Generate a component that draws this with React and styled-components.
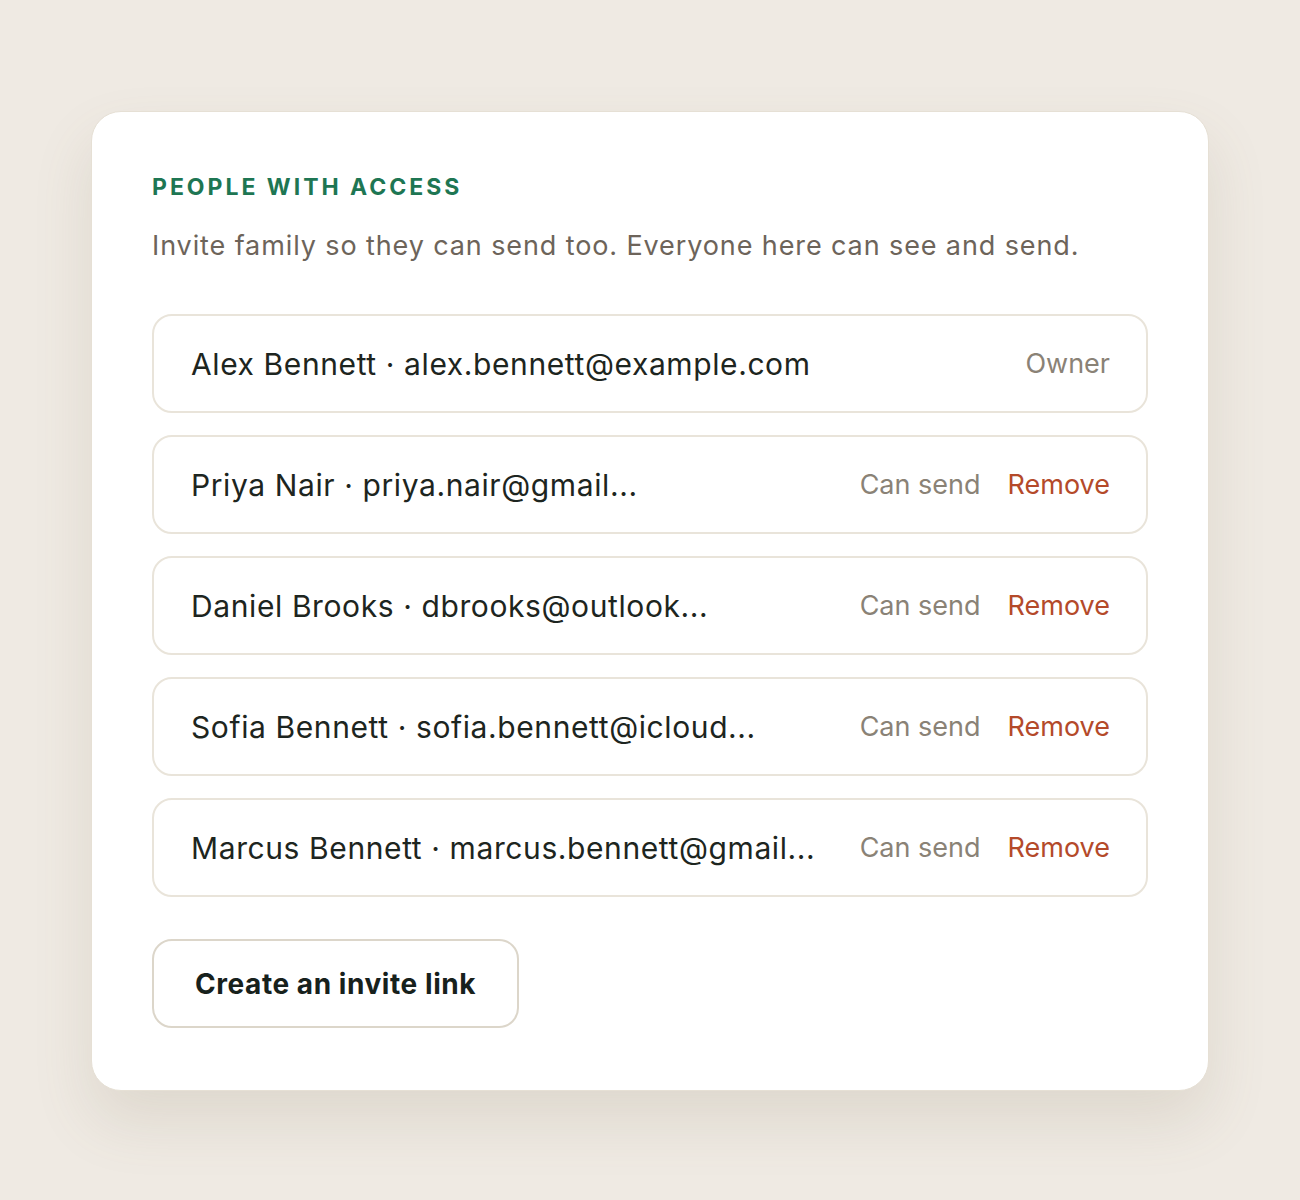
import styled, { createGlobalStyle } from "styled-components";

const GlobalStyle = createGlobalStyle`
  html, body {
    margin: 0;
    padding: 0;
    background: #efeae3;
    font-family: Inter, "Noto Sans", sans-serif;
  }
`;

const people = [
  { name: "Alex Bennett", email: "alex.bennett@example.com", owner: true },
  { name: "Priya Nair", email: "priya.nair@gmail..." },
  { name: "Daniel Brooks", email: "dbrooks@outlook..." },
  { name: "Sofia Bennett", email: "sofia.bennett@icloud..." },
  { name: "Marcus Bennett", email: "marcus.bennett@gmail..." },
];

const App = () => (
  <>
    <GlobalStyle />
    <Page>
      <Card>
        <Heading>People with access</Heading>
        <Subtitle>Invite family so they can send too. Everyone here can see and send.</Subtitle>
        <List>
          {people.map(p => (
            <Row key={p.name}>
              <Who>{p.name} · {p.email}</Who>
              <Actions>
                {p.owner ? (
                  <Role>Owner</Role>
                ) : (
                  <>
                    <Role>Can send</Role>
                    <RemoveButton>Remove</RemoveButton>
                  </>
                )}
              </Actions>
            </Row>
          ))}
        </List>
        <InviteButton>Create an invite link</InviteButton>
      </Card>
    </Page>
  </>
);

const Page = styled.div`
  min-height: 1200px;
  padding: 111px 91px;
  box-sizing: border-box;
`;
const Card = styled.div`
  width: 1118px;
  box-sizing: border-box;
  background: #fff;
  border: 1.5px solid #e6e0d5;
  border-radius: 30px;
  padding: 59px 60px 62px;
  box-shadow: 0 30px 60px rgba(120, 105, 80, 0.14);
`;
const Heading = styled.h2`
  margin: 0;
  color: #1e7653;
  font-size: 23px;
  font-weight: 700;
  letter-spacing: 0.13em;
  text-transform: uppercase;
  line-height: 32px;
`;
const Subtitle = styled.p`
  margin: 25px 0 0;
  color: #6d645a;
  font-size: 27px;
  letter-spacing: 0.033em;
  line-height: 36px;
`;
const List = styled.div`
  margin-top: 50px;
  display: flex;
  flex-direction: column;
  gap: 22px;
`;
const Row = styled.div`
  height: 99px;
  box-sizing: border-box;
  display: flex;
  align-items: center;
  justify-content: space-between;
  padding: 0 36px 0 37px;
  border: 2px solid #e9e4da;
  border-radius: 20px;
`;
const Who = styled.span`
  color: #1d2520;
  font-size: 30px;
  letter-spacing: 0.02em;
`;
const Actions = styled.div`
  display: flex;
  align-items: center;
  gap: 27px;
`;
const Role = styled.span`
  color: #8a8276;
  font-size: 27px;
`;
const RemoveButton = styled.button`
  border: 0;
  background: none;
  padding: 0;
  font: inherit;
  font-size: 27px;
  color: #b44a2a;
  cursor: pointer;
`;
const InviteButton = styled.button`
  margin-top: 42px;
  height: 89px;
  padding: 0 41px;
  background: #fff;
  border: 2px solid #dcd6ca;
  border-radius: 20px;
  font-family: inherit;
  font-size: 28px;
  font-weight: 700;
  letter-spacing: 0.02em;
  color: #17211c;
  cursor: pointer;
`;

export default App;
